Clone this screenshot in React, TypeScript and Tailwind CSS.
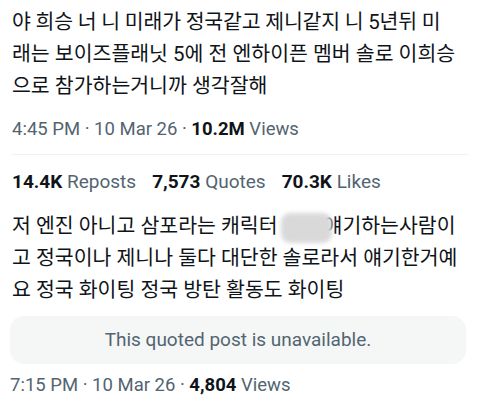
export default function App() {
  const font = { fontFamily: 'Roboto, "Noto Sans CJK KR", sans-serif' };

  return (
    <main style={font} className="w-[480px] h-[403px] overflow-hidden bg-white text-[#0f1419]">
      <div className="px-3 pt-[6px] text-[20.5px] leading-[32px] whitespace-nowrap [font-feature-settings:'palt']">
        <div className="tracking-[-0.2px]">야 희승 너 니 미래가 정국같고 제니같지 니 5년뒤 미</div>
        <div>래는 보이즈플래닛 5에 전 엔하이픈 멤버 솔로 이희승</div>
        <div>으로 참가하는거니까 생각잘해</div>
      </div>

      <div className="mt-[14px] px-3 text-[18.5px] leading-[26px] text-[#536471]">
        4:45 PM · 10 Mar 26 · <span className="font-bold text-[#0f1419]">10.2M</span> Views
      </div>

      <div className="mx-3 mt-[12px] border-t border-[#eff3f4]" />

      <div className="mt-[14px] flex gap-4 px-3 text-[19px] leading-[26px] text-[#536471]">
        <span>
          <span className="font-bold text-[#0f1419]">14.4K</span> Reposts
        </span>
        <span>
          <span className="font-bold text-[#0f1419]">7,573</span> Quotes
        </span>
        <span>
          <span className="font-bold text-[#0f1419]">70.3K</span> Likes
        </span>
      </div>

      <div className="mt-[15px] px-3 text-[20.5px] leading-[32px] whitespace-nowrap [font-feature-settings:'palt']">
        <div>
          저 엔진 아니고 삼포라는 캐릭터
          <span className="relative inline-block h-[28px] w-[46px] align-middle">
            <span className="absolute left-[3px] top-[-1px] h-[30px] w-[51px] rounded-[9px] bg-[#d9d9d9] blur-[2px]" />
          </span>
          얘기하는사람이
        </div>
        <div>고 정국이나 제니나 둘다 대단한 솔로라서 얘기한거예</div>
        <div>요 정국 화이팅 정국 방탄 활동도 화이팅</div>
      </div>

      <div className="mx-[10px] mt-[10px] flex h-[48px] w-[456px] items-center justify-center rounded-[14px] bg-[#f5f7f6] text-[19px] text-[#536471]">
        This quoted post is unavailable.
      </div>

      <div className="mt-[8px] px-[10px] text-[18.5px] leading-[26px] text-[#536471]">
        7:15 PM · 10 Mar 26 · <span className="font-bold text-[#0f1419]">4,804</span> Views
      </div>
    </main>
  );
}
